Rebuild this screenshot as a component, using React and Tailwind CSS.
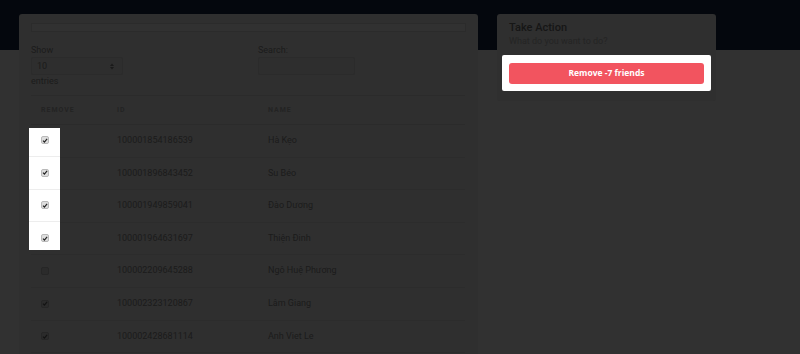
const rows = [
  { id: '100001854186539', name: 'Hà Kẹo', checked: true },
  { id: '100001896843452', name: 'Su Béo', checked: true },
  { id: '100001949859041', name: 'Đào Dương', checked: true },
  { id: '100001964631697', name: 'Thiện Đinh', checked: true },
  { id: '100002209645288', name: 'Ngô Huệ Phương', checked: false },
  { id: '100002323120867', name: 'Lâm Giang', checked: true },
  { id: '100002428681114', name: 'Anh Viet Le', checked: true },
]

function Check({ checked, light }) {
  return (
    <span
      className={
        light
          ? 'flex h-[8px] w-[8px] items-center justify-center rounded-[2px] border border-[#b9b9b9] bg-[#dedede]'
          : 'flex h-[8px] w-[8px] items-center justify-center rounded-[2px] border border-[#262626] bg-[#2b2b2b]'
      }
    >
      {checked && (
        <svg width="7" height="7" viewBox="0 0 8 8">
          <path d="M1.3 4.2 L3.2 6.1 L6.8 1.8" fill="none" stroke={light ? '#222' : '#141414'} strokeWidth="1.6" />
        </svg>
      )}
    </span>
  )
}

export default function App() {
  return (
    <div className="relative h-[354px] w-[800px] overflow-hidden bg-[#313131] font-['Roboto',sans-serif] text-[#1b1b1b]">
      {/* dark nav band */}
      <div className="h-[50px] bg-[#04070d]" />

      <div className="-mt-[36px] flex gap-[19px] pl-[19px]">
        {/* friends table card */}
        <div className="h-[400px] w-[459px] rounded-[3px] bg-[#2f2f2f] px-[12px] pt-[9px]">
          <div className="h-[9px] border border-[#2b2b2b] bg-[#313131]" />

          <div className="mt-[13px] grid grid-cols-[227px_1fr] text-[9px] leading-[10px]">
            <div>
              <div>Show</div>
              <div className="mt-[2px] flex h-[18px] w-[92px] items-center justify-between rounded-[2px] border border-[#2b2b2b] bg-[#2e2e2e] pl-[5px] pr-[8px]">
                <span>10</span>
                <svg width="4" height="7" viewBox="0 0 4 7">
                  <path d="M0 3 L2 0.5 L4 3 Z M0 4 L2 6.5 L4 4 Z" fill="#1a1a1a" />
                </svg>
              </div>
              <div className="mt-[1px]">entries</div>
            </div>
            <div>
              <div>Search:</div>
              <div className="mt-[2px] h-[18px] w-[97px] rounded-[2px] border border-[#2b2b2b] bg-[#2e2e2e]" />
            </div>
          </div>

          <div className="relative mt-[9px] w-[434px]">
            <table className="w-full border-collapse text-left text-[9px]">
              <thead>
                <tr className="h-[29px] border-y border-[#2b2b2b] text-[7px] font-bold uppercase tracking-[1px] text-[#232323]">
                  <th className="w-[76px] pl-[10px] font-bold">Remove</th>
                  <th className="w-[151px] pl-[10px] font-bold">ID</th>
                  <th className="pl-[10px] font-bold">Name</th>
                </tr>
              </thead>
              <tbody>
                {rows.map((r) => (
                  <tr key={r.id} className="h-[32.6px] border-b border-[#2c2c2c]">
                    <td className="pl-[10px]">
                      <Check checked={r.checked} />
                    </td>
                    <td className="pl-[10px]">{r.id}</td>
                    <td className="pl-[10px]">{r.name}</td>
                  </tr>
                ))}
              </tbody>
            </table>

            {/* tour highlight over the first four checkboxes */}
            <div className="absolute left-[-2px] top-[33px] h-[122px] w-[31px] overflow-hidden bg-white">
              <div className="-mt-[3.5px]">
                {rows.slice(0, 4).map((r) => (
                  <div key={r.id} className="flex h-[32.6px] items-center border-b border-[#ededed] pl-[12px]">
                    <Check checked light />
                  </div>
                ))}
              </div>
            </div>
          </div>
        </div>

        {/* action card */}
        <div className="h-[87px] w-[219px] rounded-[3px] bg-[#2f2f2f] pt-[6px]">
          <div className="px-[12px]">
            <div className="text-[11px] font-medium leading-[15px] text-[#161616]">Take Action</div>
            <div className="text-[9px] leading-[12px] text-[#242424]">What do you want to do?</div>
          </div>
          <div className="mx-[5px] mt-[8px] rounded-[2px] bg-white px-[7px] pb-[7px] pt-[8px]">
            <button className="flex h-[21px] w-full items-center justify-center rounded-[3px] bg-[#f2545f] font-['Open_Sans',sans-serif] text-[8.5px] font-bold text-white">
              Remove -7 friends
            </button>
          </div>
        </div>
      </div>
    </div>
  )
}
